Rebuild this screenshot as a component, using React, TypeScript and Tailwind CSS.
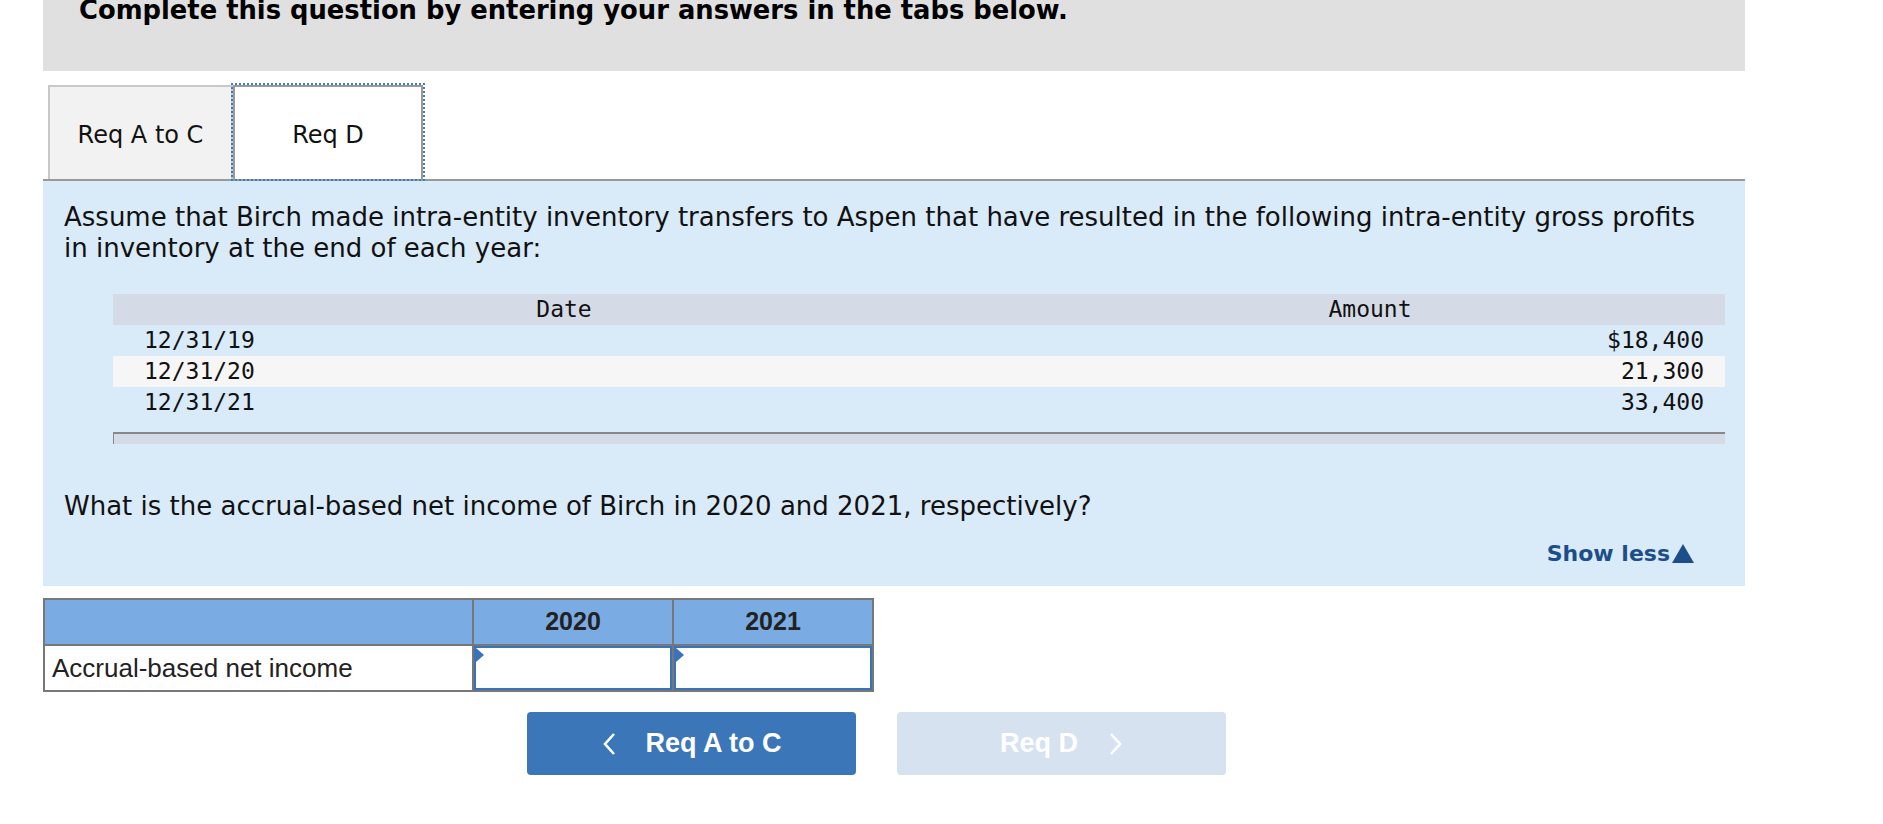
import React from "react";

const rows = [
  { date: "12/31/19", amount: "$18,400", shade: false },
  { date: "12/31/20", amount: "21,300", shade: true },
  { date: "12/31/21", amount: "33,400", shade: false },
];

function Chevron({ dir }: { dir: "left" | "right" }) {
  return (
    <svg width="14" height="24" viewBox="0 0 14 24" className="shrink-0">
      <path
        d={dir === "left" ? "M12 2 L3 12 L12 22" : "M2 2 L11 12 L2 22"}
        fill="none"
        stroke="white"
        strokeWidth="2.6"
      />
    </svg>
  );
}

function AnswerCell() {
  return (
    <td className="border-2 border-[#777] p-0 h-[46px]">
      <div className="relative h-full w-full border-2 border-[#3b73b9] bg-white">
        <span className="absolute left-0 top-0 w-0 h-0 border-y-[7px] border-y-transparent border-l-[8px] border-l-[#3b73b9]" />
      </div>
    </td>
  );
}

export default function App() {
  return (
    <div className="min-h-screen bg-white">
      <div className="ml-[43px] w-[1702px]">
        {/* instructions header, scrolled so the text is half cut */}
        <div className="h-[71px] bg-[#e0e0e0] overflow-hidden pl-[36px]">
          <div className="-mt-[5px] font-['DejaVu_Sans',sans-serif] font-bold text-[25.8px] leading-[30px] text-black">
            Complete this question by entering your answers in the tabs below.
          </div>
        </div>

        {/* tabs */}
        <div className="flex items-end pt-[14px] pl-[5px] border-b-2 border-[#999] font-['DejaVu_Sans',sans-serif] text-[24px] text-[#111]">
          <div className="w-[185px] h-[94px] pt-[4px] bg-[#f2f2f2] border-2 border-b-0 border-[#c8c8c8] flex items-center justify-center">
            Req A to C
          </div>
          <div className="w-[190px] h-[94px] pt-[4px] bg-white border-2 border-b-0 border-[#999] outline-2 outline-dotted outline-[#3b7bd0] flex items-center justify-center">
            Req D
          </div>
        </div>

        {/* question panel */}
        <div className="bg-[#d9eaf8] pt-[21px] pb-[17px] pl-[21px] pr-[20px] font-['DejaVu_Sans',sans-serif] text-[#111]">
          <p className="text-[26px] leading-[31px]">
            Assume that Birch made intra-entity inventory transfers to Aspen that have resulted in the following intra-entity gross profits
            <br />
            in inventory at the end of each year:
          </p>

          <div className="mt-[30px] ml-[49px] font-['DejaVu_Sans_Mono',monospace] text-[23px] leading-[31px] text-[#111]">
            <div className="grid grid-cols-[902px_1fr] bg-[#d5dbe6] h-[31px]">
              <div className="text-center">Date</div>
              <div className="text-center">Amount</div>
            </div>
            {rows.map((r) => (
              <div
                key={r.date}
                className={`grid grid-cols-[902px_1fr] h-[31px] ${r.shade ? "bg-[#f6f6f6]" : ""}`}
              >
                <div className="pl-[31px]">{r.date}</div>
                <div className="text-right pr-[21px]">{r.amount}</div>
              </div>
            ))}
            <div className="mt-[14px] h-[12px] bg-[#d5dbe6] border-t-2 border-l border-[#888]" />
          </div>

          <p className="mt-[47px] text-[26px] leading-[31px]">
            What is the accrual-based net income of Birch in 2020 and 2021, respectively?
          </p>

          <div className="mt-[17px] flex justify-end pr-[31px]">
            <button className="flex items-center gap-[2px] font-bold text-[22px] leading-[30px] text-[#1c4f8a]">
              Show less
              <svg width="22" height="19" viewBox="0 0 22 19" className="mb-[1px]">
                <path d="M11 0 L22 19 L0 19 Z" fill="#1c4f8a" />
              </svg>
            </button>
          </div>
        </div>

        {/* answer grid */}
        <table className="mt-[12px] border-collapse border-2 border-[#777] font-['Liberation_Sans',Arial,sans-serif]">
          <thead>
            <tr className="bg-[#7aace3] h-[46px]">
              <th className="w-[429px] border-2 border-[#777]" />
              <th className="w-[200px] border-2 border-[#777] text-[25px] font-bold text-[#222]">2020</th>
              <th className="w-[200px] border-2 border-[#777] text-[25px] font-bold text-[#222]">2021</th>
            </tr>
          </thead>
          <tbody>
            <tr>
              <td className="border-2 border-[#777] pl-[7px] text-[26px] text-[#222] h-[46px]">
                Accrual-based net income
              </td>
              <AnswerCell />
              <AnswerCell />
            </tr>
          </tbody>
        </table>

        {/* prev / next */}
        <div className="mt-[20px] ml-[484px] flex gap-[41px] font-['Liberation_Sans',Arial,sans-serif] font-bold text-[27px] text-white">
          <button className="w-[329px] h-[63px] rounded-[4px] bg-[#3b76b9] flex items-center justify-center gap-[30px]">
            <Chevron dir="left" />
            <span>Req A to C</span>
          </button>
          <button className="w-[329px] h-[63px] rounded-[4px] bg-[#d6e2f0] flex items-center justify-center gap-[31px]">
            <span>Req D</span>
            <Chevron dir="right" />
          </button>
        </div>
      </div>
    </div>
  );
}
